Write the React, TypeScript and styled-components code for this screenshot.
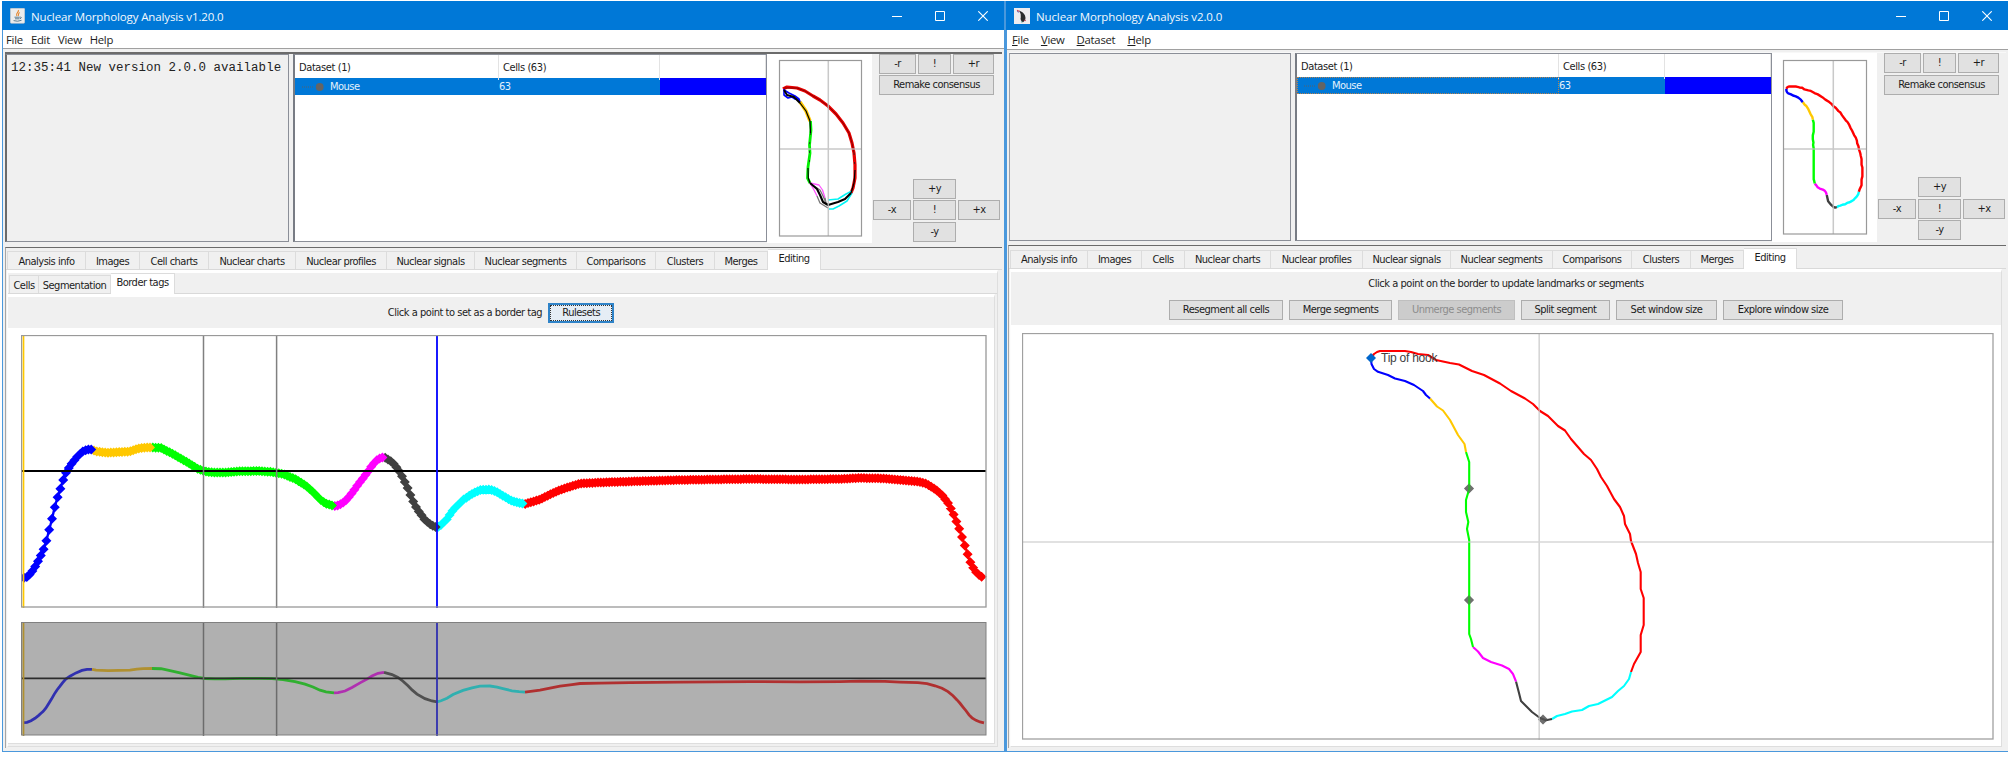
import React from "react";
import styled, { createGlobalStyle, css } from "styled-components";

const Global = createGlobalStyle`
  *, *::before, *::after { box-sizing: border-box; }
  body { margin: 0; background: #fff; }
  svg { display: block; }
`;

const uiFont = `"DejaVu Sans Condensed", "DejaVu Sans", "Liberation Sans", sans-serif`;

const Desktop = styled.div`
  width: 2008px;
  height: 768px;
  padding: 1px 0 0 2px;
  display: flex;
  overflow: hidden;
  background: #fff;
  font-family: ${uiFont};
  font-stretch: condensed;
  font-size: 11px;
  letter-spacing: -0.5px;
  color: #1c1c1c;
  white-space: nowrap;
`;

const Window = styled.section<{ $w: number; $open?: boolean }>`
  width: ${(p) => p.$w}px;
  height: 751px;
  flex: none;
  display: flex;
  flex-direction: column;
  background: #f0f0f0;
  border: 1px solid #4a98dc;
  border-top: 0;
  ${(p) => p.$open && css`border-right: 0; border-left-width: 2px;`}
`;

const TitleBar = styled.header`
  height: 29px;
  flex: none;
  margin-left: -1px;
  padding-left: 8px;
  display: flex;
  align-items: center;
  background: #0078d7;
  color: #f4f9fd;
`;

const TitleText = styled.h1`
  margin: 1px 0 0 6px;
  flex: 1;
  font: 400 11.5px "Open Sans", "Noto Sans", sans-serif;
  letter-spacing: -0.12px;
`;

const WinButtons = styled.div<{ $end: number }>`
  display: flex;
  gap: 33px;
  margin-right: ${(p) => p.$end}px;
`;

const MenuBar = styled.nav<{ $h: number; $gap: number; $left: number }>`
  height: ${(p) => p.$h}px;
  flex: none;
  display: flex;
  align-items: center;
  gap: ${(p) => p.$gap}px;
  padding-left: ${(p) => p.$left}px;
  background: #fff;
  border-bottom: 1px solid #a0a0a0;
  font: 400 11.3px "Open Sans", "Noto Sans", sans-serif;
  letter-spacing: -0.25px;
`;

const TopRow = styled.div<{ $h: number; $dark?: boolean }>`
  margin: ${(p) => (p.$dark ? 3 : 2)}px 2px 0 2px;
  height: ${(p) => p.$h}px;
  flex: none;
  display: flex;
  border-top: ${(p) => (p.$dark ? "2px solid #6b6b6b" : "1px solid #f8f8f8")};
`;

const LogPanel = styled.div<{ $dark?: boolean }>`
  width: ${(p) => (p.$dark ? 284 : 282)}px;
  flex: none;
  margin-bottom: 1px;
  border: 1px solid #8b8f98;
  border-left: ${(p) => (p.$dark ? "2px solid #6b6b6b" : "1px solid #9b9fa8")};
  padding: 6px 0 0 4px;
  font: 400 12.45px "Liberation Mono", monospace;
  letter-spacing: 0.04px;
  color: #222;
`;

const Table = styled.div<{ $w: number; $gap: number }>`
  width: ${(p) => p.$w}px;
  flex: none;
  margin: 0 0 1px ${(p) => p.$gap}px;
  background: #fff;
  border: 1px solid #8b8f98;
  border-left: 2px solid #787c84;
`;

const TableLine = styled.div<{ $cols: string; $head?: boolean; $focus?: boolean }>`
  display: grid;
  grid-template-columns: ${(p) => p.$cols};
  height: ${(p) => (p.$head ? 23 : 17)}px;
  line-height: ${(p) => (p.$head ? 25 : 17)}px;
  ${(p) =>
    !p.$head &&
    css`
      background: #0078d7;
      color: #e4f1fb;
      > :last-child { background: #0000ff; }
    `}
  ${(p) => p.$focus && css`> :first-child { outline: 1px dotted #b5814f; outline-offset: -1px; }`}
`;

const HeadCell = styled.div`
  padding-left: 4px;
  border-right: 1px solid #e3e3e3;
  letter-spacing: -0.4px;
`;

const Cell = styled.div`
  display: flex;
  align-items: center;
`;

const MiniPanel = styled.div<{ $w: number }>`
  width: ${(p) => p.$w}px;
  flex: none;
  background: #fff;
`;

const Controls = styled.div<{ $gap: number; $left: number }>`
  flex: 1;
  display: flex;
  flex-direction: column;
  align-items: flex-start;
  padding-left: ${(p) => p.$left}px;
  > :nth-child(3) { margin-top: ${(p) => p.$gap}px; }
`;

const ButtonLine = styled.div<{ $left?: number }>`
  display: flex;
  gap: 2px;
  height: 21.5px;
  padding-left: ${(p) => p.$left ?? 0}px;
`;

const Button = styled.button<{ $w: number }>`
  width: ${(p) => p.$w}px;
  height: 20px;
  flex: none;
  padding: 0;
  border: 1px solid #adadad;
  background: #e1e1e1;
  color: #1c1c1c;
  font: inherit;
  letter-spacing: inherit;
  line-height: 16px;
  &:disabled { background: #cccccc; border-color: #bfbfbf; color: #8d8d8d; }
  &[data-focused="true"] {
    background: #e5edf5;
    border: 2px solid #2f83c8;
    outline: 1px dotted #333;
    outline-offset: -3px;
    line-height: 15px;
  }
`;

const TabPane = styled.div<{ $top: number; $left: number }>`
  flex: 1;
  margin: ${(p) => p.$top}px 2px 3px ${(p) => p.$left}px;
  border-top: 1px solid #6b6b6b;
  border-left: 1px solid #a5a5a5;
  display: flex;
  flex-direction: column;
  min-height: 0;
`;

const Tabs = styled.div<{ $left: number; $h: number; $top: number }>`
  height: ${(p) => p.$h}px;
  flex: none;
  margin-top: ${(p) => p.$top}px;
  padding-left: ${(p) => p.$left}px;
  display: flex;
  align-items: flex-end;
  border-bottom: 1px solid #d9d9d9;
`;

const Tab = styled.div<{ $w: number; $on?: boolean; $line: number }>`
  width: ${(p) => p.$w}px;
  height: 18px;
  flex: none;
  text-align: center;
  line-height: ${(p) => p.$line}px;
  border: 1px solid #dcdcdc;
  border-width: 1px 1px 0 0;
  background: #f0f0f0;
  &:first-child { border-left-width: 1px; }
  ${(p) =>
    p.$on &&
    css`
      height: 21px;
      margin-bottom: -1px;
      background: #fff;
    `}
`;

const Page = styled.div`
  flex: 1;
  min-height: 0;
  display: flex;
  flex-direction: column;
  border: 1px solid #dedede;
  border-top: 3px solid #fff;
  border-left: 1px solid #fdfdfd;
  margin: 0 4px 1px 1px;
`;

const InnerPage = styled.div`
  flex: 1;
  min-height: 0;
  display: flex;
  flex-direction: column;
  margin: 0 2px 2px 0;
  border: 1px solid #dedede;
  border-top: 3px solid #fff;
  border-left: 0;
`;

const ToolLine = styled.div<{ $h: number; $gap: number }>`
  height: ${(p) => p.$h}px;
  flex: none;
  display: flex;
  justify-content: center;
  align-items: center;
  gap: ${(p) => p.$gap}px;
`;

const ChartArea = styled.div<{ $pad: string }>`
  flex: 1;
  min-height: 0;
  background: #fff;
  padding: ${(p) => p.$pad};
  display: flex;
  flex-direction: column;
  gap: 14px;
`;

const Note = styled.span`
  letter-spacing: -0.47px;
`;

type Pt = [number, number];
type Segment = { color: string; muted: string; pts: Pt[] };

const profile: Segment[] = [
  { color: "#0000ff", muted: "#3030b0", pts: [[24, 577.7], [27, 577], [31, 573], [35, 567], [38.7, 560], [41, 555], [43, 551], [45.8, 543], [48.6, 532], [51.5, 521], [54.3, 509], [57, 499], [60, 490], [62.5, 482], [65.5, 473.5], [70, 466], [76, 458], [82, 452], [87, 449.5], [92, 449.5]] },
  { color: "#ffc800", muted: "#b09030", pts: [[92, 449.5], [96, 451.5], [108, 452.7], [130, 451.5], [137, 449], [143, 447.7], [152, 447.5]] },
  { color: "#00ff00", muted: "#30b030", pts: [[152, 447.5], [161, 448], [170, 452.5], [180, 458], [190, 464], [198, 469], [205, 471.5], [215, 472.5], [225, 472.5], [240, 471.3], [260, 471], [272, 472], [283, 474], [295, 479], [305, 485], [313, 492], [320, 499.5], [326, 503.5], [334, 506]] },
  { color: "#ff00ff", muted: "#b030b0", pts: [[334, 506], [338, 505.5], [345, 501.5], [352, 493], [360, 482], [367, 473], [372, 465.5], [378, 459], [384, 457]] },
  { color: "#404040", muted: "#505050", pts: [[384, 457], [392, 462], [398, 469], [403, 478], [408, 489], [412, 499], [417, 509], [425, 520], [432, 525.5], [437, 527.5]] },
  { color: "#00ffff", muted: "#30b0b0", pts: [[437, 527.5], [441, 525], [447, 519], [453, 510], [463, 500], [472, 494], [480, 490], [490, 489.5], [497, 492], [505, 497], [512, 501], [519, 503], [525, 504]] },
  { color: "#ff0000", muted: "#b03030", pts: [[525, 504], [540, 499.5], [550, 494.5], [560, 490], [572, 486], [580, 483.5], [600, 482.5], [630, 481.5], [680, 480], [750, 479], [800, 479.5], [840, 479], [860, 478], [885, 478.5], [900, 480], [918, 481.5], [927, 484], [935, 489], [942, 495], [948, 503], [953, 513], [957, 523], [960, 531], [963, 540], [966, 549], [969, 559], [972, 566], [976, 572], [980, 576], [984, 578]] },
];

const poly = (pts: Pt[]) => pts.map((p) => p.join(",")).join(" ");

const STEP = 2.8;

function valueAt(pts: Pt[], x: number) {
  for (let i = 1; i < pts.length; i++) {
    if (x <= pts[i][0]) {
      const [x0, y0] = pts[i - 1];
      const [x1, y1] = pts[i];
      return y0 + ((y1 - y0) * (x - x0)) / (x1 - x0);
    }
  }
  return pts[pts.length - 1][1];
}

function markers(pts: Pt[]) {
  const first = pts[0][0];
  const last = pts[pts.length - 1][0];
  let d = "";
  const start = 24 + Math.ceil((first - 24) / STEP) * STEP;
  for (let x = start; x <= last; x += STEP) {
    const y = valueAt(pts, x);
    d += `M${x - 5} ${y}l5 -5l5 5l-5 5z`;
  }
  return d;
}

const Verticals = ({ y, h, muted }: { y: number; h: number; muted?: boolean }) => (
  <g>
    <path d={`M203.5 ${y}v${h}M276.6 ${y}v${h}`} stroke={muted ? "#6c6c6c" : "#808080"} strokeWidth="1.5" />
    <path d={`M437 ${y}v${h}`} stroke={muted ? "#3030b0" : "#0000ff"} strokeWidth="1.8" />
    <path d={`M23.5 ${y}v${h}`} stroke={muted ? "#b09030" : "#ffc800"} strokeWidth="1.7" />
  </g>
);

const ProfileChart = () => (
  <svg width="966" height="273" viewBox="21 335 966 273">
    {[...profile].reverse().map((s) => (
      <g key={s.color}>
        <polyline points={poly(s.pts)} fill="none" stroke={s.color} strokeWidth="2.4" />
        <path d={markers(s.pts)} fill={s.color} />
      </g>
    ))}
    <path d="M21 471H986" stroke="#000" strokeWidth="2" />
    <Verticals y={335} h={273} />
    <rect x="21.5" y="335.5" width="964.5" height="271.5" fill="none" stroke="#999" strokeWidth="1.3" />
  </svg>
);

const RangeChart = () => (
  <svg width="966" height="114" viewBox="21 622 966 114">
    <rect x="21" y="622" width="965" height="113" fill="#b0b0b0" />
    {profile.map((s) => (
      <polyline
        key={s.color}
        points={poly(s.pts.map(([x, y]) => [x, 678.3 + (y - 471) * 0.416] as Pt))}
        fill="none"
        stroke={s.muted}
        strokeWidth="2.8"
      />
    ))}
    <path d="M21 678.4H986" stroke="#2c2c2c" strokeWidth="1.8" />
    <Verticals y={622} h={114} muted />
    <rect x="21.5" y="622.5" width="964.5" height="112.5" fill="none" stroke="#808080" />
  </svg>
);

const outline: { color: string; pts: Pt[] }[] = [
  { color: "#ff0000", pts: [[1371, 358], [1374, 354], [1377, 352], [1380, 351], [1405, 351], [1411, 352], [1418, 354], [1428, 355], [1436, 360], [1450, 363], [1459, 364.5], [1472, 371], [1484, 375], [1500, 383.5], [1511, 391], [1525, 398.5], [1533, 404], [1540, 411], [1548, 416], [1558, 426], [1565, 430.5], [1571, 439], [1584, 454], [1591, 460], [1597, 469], [1601, 477], [1607, 486], [1614, 499], [1620, 507], [1624, 516], [1625, 524], [1630, 534], [1631, 541], [1636, 554], [1638, 563], [1640.7, 572], [1640.7, 589], [1643.7, 598], [1643.7, 625], [1640.7, 635], [1640.7, 652], [1634, 664], [1631, 672]] },
  { color: "#00ffff", pts: [[1631, 672], [1629, 679], [1624, 686], [1618, 691], [1612, 697], [1602, 702], [1598, 704], [1589, 706], [1582, 710], [1572, 711.5], [1565, 714], [1557, 716], [1552, 719]] },
  { color: "#404040", pts: [[1552, 719], [1546, 720.3], [1540, 718], [1532, 712], [1526, 706], [1521, 701], [1519, 693], [1516, 681.5]] },
  { color: "#ff00ff", pts: [[1516, 681.5], [1513, 674], [1509, 669], [1502, 665.5], [1491, 662], [1483, 658], [1478, 651.5], [1473, 647]] },
  { color: "#00ff00", pts: [[1473, 647], [1471, 639], [1469.2, 634], [1469.2, 540], [1467, 529], [1468.3, 522], [1466, 512], [1466, 500], [1469.2, 489], [1469.2, 462], [1466, 452]] },
  { color: "#ffc800", pts: [[1466, 452], [1464.5, 444], [1458, 435], [1450, 420], [1443, 410.5], [1437, 406.5], [1430, 398.5]] },
  { color: "#0000ff", pts: [[1430, 398.5], [1426, 395], [1423, 391], [1414, 385], [1405, 381], [1395, 378.5], [1388, 375], [1378, 371.8], [1374, 369], [1371.5, 364], [1371, 358]] },
];

const Outline = ({ width }: { width: number }) => (
  <g fill="none" strokeWidth={width} strokeLinejoin="round">
    {outline.map((s) => (
      <polyline key={s.color} points={poly(s.pts)} stroke={s.color} vectorEffect="non-scaling-stroke" />
    ))}
  </g>
);

const LANDMARKS = "M1464 488.5l5-5l5 5l-5 5zM1464 600l5-5l5 5l-5 5zM1538 719.5l5-5l5 5l-5 5z";

const OutlineChart = () => (
  <svg width="972" height="407" viewBox="1022 333 972 407">
    <path fill="#808080" d={LANDMARKS} />
    <Outline width={2.1} />
    <path fill="#606060" fillOpacity="0.5" d={LANDMARKS} />
    <path d="M1539.2 333V740M1022 542H1994" stroke="#c8c8c8" strokeOpacity="0.75" strokeWidth="1.6" />
    <path fill="#0066cc" d="M1366 358l5-5l5 5l-5 5z" />
    <text x="1381" y="362" fill="#404040" fontFamily="Liberation Sans, sans-serif" fontSize="12" letterSpacing="-0.25">
      Tip of hook
    </text>
    <rect x="1022.5" y="333.5" width="970.5" height="405.5" fill="none" stroke="#a0a0a0" strokeWidth="1.3" />
  </svg>
);

const MiniConsensusOld = () => (
  <svg width="105" height="190" viewBox="767 54 105 190">
    <g fill="none" strokeLinejoin="round">
      <path stroke="#e80000" strokeWidth="3.2" d="M783 89L787 87L797 88L805 91L813 96L820 100L828 106L836 114L843 123L849 133L852 143L854 153L855 165L855 178L853 188L851 193" />
      <path stroke="#8c0000" strokeWidth="1" d="M784 88L797 88L805 91L813 96L820 100L828 106L836 114L843 123L849 133L852 143L854 153" />
      <path stroke="#0000ff" strokeWidth="1.6" d="M784 89L784 95L788 98L792 97L795 99L798 99L801 104M784 90L789 93L795 96L799 99L801 104" />
      <path stroke="#ffc800" strokeWidth="3.4" d="M800 102L806 111L810 121" />
      <path stroke="#00f000" strokeWidth="2.8" d="M810.5 121L811 130L809.5 145L810 153L808 167L807.5 178L810 183" />
      <path stroke="#f5f" strokeWidth="1.3" d="M810 183L819 185L822.5 190L825 198M810 183L814 190L817 196" />
      <path stroke="#777" strokeWidth="1.3" d="M825 198L826 203L829 206M817 196L820 203L828 208M814 186L820 190L823 196L826 203" />
      <path stroke="#00f4f4" strokeWidth="1.5" d="M828 200L838 199L846 194L852 191M829 209L833 209L839 206L847 201L852 193" />
      <path stroke="#000" strokeWidth="1.9" d="M784 90L787 95L794 97L800 103" />
      <path stroke="#000" strokeWidth="1.2" d="M800 103L806 111L810 121L810.5 133M808 168L808.3 178L810 183" />
      <path stroke="#000" strokeWidth="2.1" d="M810 183L817 189L820 195L823 202L828 205L838 202L845 199L851 193" />
      <path stroke="#000" strokeWidth="1.2" d="M851 193L854 183L855 170" />
      <path stroke="#222" strokeDasharray="2 7" strokeWidth="0.8" d="M810.5 133L809.5 145L809.5 168M854 153L855 170" />
    </g>
    <path d="M828.3 61V236M779 149H861" stroke="#c0c0c0" strokeOpacity="0.85" strokeWidth="1.5" />
    <rect x="779.5" y="60.5" width="82" height="175.5" fill="none" stroke="#999" strokeWidth="1.2" />
  </svg>
);

const MiniConsensusNew = () => (
  <svg width="105" height="188" viewBox="1772 53 105 188">
    <g transform="translate(1786.3 86.5) scale(0.279 0.328) translate(-1371 -351)">
      <Outline width={2.4} />
    </g>
    <path d="M1833.3 61V234M1783 149H1867" stroke="#c0c0c0" strokeOpacity="0.85" strokeWidth="1.5" />
    <rect x="1783.5" y="60.5" width="83" height="173.5" fill="none" stroke="#999" strokeWidth="1.2" />
  </svg>
);

const JavaIcon = () => (
  <svg width="15" height="16" viewBox="0 0 15 16">
    <rect x="0.3" y="0.3" width="14.4" height="15" rx="1" fill="#ececec" stroke="#c4c4c4" strokeWidth="0.6" />
    <path d="M8.3 2C9.5 4 5.3 5 6.8 8M9.7 4.5C7.6 5.5 9.2 6.5 8.1 8" fill="none" stroke="#e5862e" strokeWidth="1.1" />
    <path d="M4.5 9.2H9.8M5 10.8H9.5M3.6 12.6Q7.5 14 11.5 12.3M10.2 9Q12.6 9 10 11" fill="none" stroke="#4d7187" strokeWidth="0.9" />
  </svg>
);

const NucleusIcon = () => (
  <svg width="16" height="16" viewBox="0 0 16 16">
    <rect width="16" height="16" fill="#eeecef" />
    <path d="M5 2.5Q9.5 4 11 7.5Q12.5 12 9 14.2Q5.8 12.5 6.8 9.3Q7.4 6 5 2.5Z" fill="#2b2b2d" />
    <path d="M3 2.4L5.4 3.5M10.5 12L11.7 12.8" stroke="#c8455a" strokeWidth="1.2" />
    <path d="M3.4 3.2L4.4 4.6" stroke="#4d6ac8" />
    <path d="M7 13.5L8.3 14.5" stroke="#45aaa4" />
  </svg>
);

const WindowGlyphs = ({ end }: { end: number }) => (
  <WinButtons $end={end}>
    <svg width="10" height="10" viewBox="0 0 10 10"><path d="M0 5.5H10" stroke="#fff" /></svg>
    <svg width="10" height="10" viewBox="0 0 10 10"><path d="M.5 .5h9v9h-9z" fill="none" stroke="#fff" /></svg>
    <svg width="10" height="10" viewBox="0 0 10 10"><path d="M.3 .3L9.7 9.7M9.7 .3L.3 9.7" stroke="#fff" strokeWidth="1.1" /></svg>
  </WinButtons>
);

const TreeNode = () => (
  <svg width="35" height="17" viewBox="0 0 35 17">
    <path d="M7 9H18" stroke="#57606b" strokeDasharray="1 1" />
    <circle cx="24.7" cy="9" r="3.9" fill="#646464" />
  </svg>
);

const DatasetTable = ({ width, gap, cols, focus }: { width: number; gap: number; cols: string; focus?: boolean }) => (
  <Table $w={width} $gap={gap}>
    <TableLine $cols={cols} $head>
      <HeadCell>Dataset (1)</HeadCell>
      <HeadCell>Cells (63)</HeadCell>
      <HeadCell />
    </TableLine>
    <TableLine $cols={cols} $focus={focus}>
      <Cell><TreeNode />Mouse</Cell>
      <Cell>63</Cell>
      <Cell />
    </TableLine>
  </Table>
);

const ConsensusControls = ({ gap, left }: { gap: number; left: number }) => (
  <Controls $gap={gap} $left={left}>
    <ButtonLine $left={6}>
      <Button $w={37}>-r</Button>
      <Button $w={33}>!</Button>
      <Button $w={41}>+r</Button>
    </ButtonLine>
    <ButtonLine $left={6}><Button $w={115}>Remake consensus</Button></ButtonLine>
    <ButtonLine $left={40}><Button $w={43}>+y</Button></ButtonLine>
    <ButtonLine>
      <Button $w={38}>-x</Button>
      <Button $w={43}>!</Button>
      <Button $w={42}>+x</Button>
    </ButtonLine>
    <ButtonLine $left={40}><Button $w={43}>-y</Button></ButtonLine>
  </Controls>
);

type StripProps = { items: [string, number][]; left: number; h: number; top: number; line?: number };

const TabStrip = ({ items, left, h, top, line = 17 }: StripProps) => (
  <Tabs $left={left} $h={h} $top={top}>
    {items.map(([label, w], i) => {
      const on = i === items.length - 1;
      return <Tab key={label} $w={w} $on={on} $line={on ? 18 : line}>{label}</Tab>;
    })}
  </Tabs>
);

const Mnemonic = ({ label }: { label: string }) => (
  <span><u>{label[0]}</u>{label.slice(1)}</span>
);

export default function App() {
  return (
    <>
      <Global />
      <Desktop>
        <Window $w={1003}>
          <TitleBar>
            <JavaIcon />
            <TitleText>Nuclear Morphology Analysis v1.20.0</TitleText>
            <WindowGlyphs end={16} />
          </TitleBar>
          <MenuBar $h={19} $gap={8} $left={3}>
            <span>File</span><span>Edit</span><span>View</span><span>Help</span>
          </MenuBar>
          <TopRow $h={191} $dark>
            <LogPanel $dark>12:35:41 New version 2.0.0 available</LogPanel>
            <DatasetTable width={474} gap={4} cols="204px 161px 1fr" />
            <MiniPanel $w={105}><MiniConsensusOld /></MiniPanel>
            <ConsensusControls gap={82} left={1} />
          </TopRow>
          <TabPane $top={4} $left={2}>
            <TabStrip
              left={1}
              h={21}
              top={1}
              line={19}
              items={[["Analysis info", 79], ["Images", 54], ["Cell charts", 69], ["Nuclear charts", 87], ["Nuclear profiles", 91], ["Nuclear signals", 88], ["Nuclear segments", 102], ["Comparisons", 79], ["Clusters", 59], ["Merges", 53], ["Editing", 53]]}
            />
            <Page>
              <TabStrip left={1} h={20} top={1} line={19} items={[["Cells", 30], ["Segmentation", 72], ["Border tags", 64]]} />
              <InnerPage>
                <ToolLine $h={31} $gap={6}>
                  <Note>Click a point to set as a border tag</Note>
                  <Button $w={66} data-focused="true">Rulesets</Button>
                </ToolLine>
                <ChartArea $pad="7px 0 0 13px">
                  <ProfileChart />
                  <RangeChart />
                </ChartArea>
              </InnerPage>
            </Page>
          </TabPane>
        </Window>
        <Window $w={1003} $open>
          <TitleBar>
            <NucleusIcon />
            <TitleText>Nuclear Morphology Analysis v2.0.0</TitleText>
            <WindowGlyphs end={16} />
          </TitleBar>
          <MenuBar $h={20} $gap={12} $left={5}>
            <Mnemonic label="File" /><Mnemonic label="View" /><Mnemonic label="Dataset" /><Mnemonic label="Help" />
          </MenuBar>
          <TopRow $h={190}>
            <LogPanel />
            <DatasetTable width={477} gap={4} cols="262px 106px 1fr" focus />
            <MiniPanel $w={105}><MiniConsensusNew /></MiniPanel>
            <ConsensusControls gap={81} left={1} />
          </TopRow>
          <TabPane $top={3} $left={1}>
            <TabStrip
              left={1}
              h={22}
              top={1}
              items={[["Analysis info", 78], ["Images", 54], ["Cells", 43], ["Nuclear charts", 86], ["Nuclear profiles", 92], ["Nuclear signals", 88], ["Nuclear segments", 102], ["Comparisons", 79], ["Clusters", 59], ["Merges", 53], ["Editing", 53]]}
            />
            <Page>
              <ToolLine $h={23} $gap={0}><Note>Click a point on the border to update landmarks or segments</Note></ToolLine>
              <ToolLine $h={30} $gap={6}>
                <Button $w={114}>Resegment all cells</Button>
                <Button $w={103}>Merge segments</Button>
                <Button $w={117} disabled>Unmerge segments</Button>
                <Button $w={89}>Split segment</Button>
                <Button $w={101}>Set window size</Button>
                <Button $w={120}>Explore window size</Button>
              </ToolLine>
              <ChartArea $pad="8px 0 0 11px">
                <OutlineChart />
              </ChartArea>
            </Page>
          </TabPane>
        </Window>
      </Desktop>
    </>
  );
}
